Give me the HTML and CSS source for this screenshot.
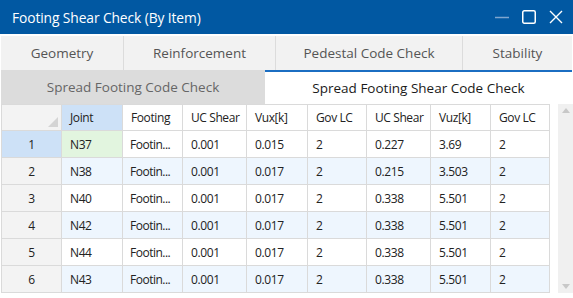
FILE: index.html
```html
<!DOCTYPE html>
<html>
<head>
<meta charset="utf-8">
<link rel="stylesheet" href="styles.css">
</head>
<body>
<div class="window">
  <div class="titlebar">
    <span class="title">Footing Shear Check (By Item)</span>
    <div class="controls">
      <svg class="ctl" width="16" height="16" viewBox="0 0 16 16"><line x1="1" y1="8.5" x2="15" y2="8.5" stroke="#7fa6cf" stroke-width="1.5"/></svg>
      <svg class="ctl" width="16" height="16" viewBox="0 0 16 16"><rect x="1.75" y="1.75" width="12.5" height="12.5" rx="1.5" fill="none" stroke="#fff" stroke-width="1.5"/></svg>
      <svg class="ctl" width="16" height="16" viewBox="0 0 16 16"><path d="M2 2 L14 14 M14 2 L2 14" stroke="#fff" stroke-width="1.4"/></svg>
    </div>
  </div>
  <div class="tabs">
    <div class="tabrow">
      <div class="tab t1">Geometry</div>
      <div class="tab t2">Reinforcement</div>
      <div class="tab t3">Pedestal Code Check</div>
      <div class="tab t4">Stability</div>
    </div>
    <div class="tabrow row2">
      <div class="tab2 inactive">Spread Footing Code Check</div>
      <div class="tab2 active">Spread Footing Shear Code Check</div>
    </div>
  </div>
  <div class="content">
    <table class="grid">
      <colgroup>
        <col class="c0"><col class="c1"><col class="c2"><col class="c3"><col class="c4"><col class="c5"><col class="c6"><col class="c7"><col class="c8">
      </colgroup>
      <thead>
        <tr>
          <th class="corner"><span class="tri"></span></th>
          <th class="hsel">Joint</th><th>Footing</th><th>UC Shear</th><th>Vux[k]</th><th>Gov LC</th><th>UC Shear</th><th>Vuz[k]</th><th>Gov LC</th>
        </tr>
      </thead>
      <tbody>
        <tr class="odd"><td class="rh rsel">1</td><td class="cur">N37</td><td class="ft">Footin...</td><td>0.001</td><td>0.015</td><td>2</td><td>0.227</td><td>3.69</td><td>2</td></tr>
        <tr class="even"><td class="rh">2</td><td>N38</td><td class="ft">Footin...</td><td>0.001</td><td>0.017</td><td>2</td><td>0.215</td><td>3.503</td><td>2</td></tr>
        <tr class="odd"><td class="rh">3</td><td>N40</td><td class="ft">Footin...</td><td>0.001</td><td>0.017</td><td>2</td><td>0.338</td><td>5.501</td><td>2</td></tr>
        <tr class="even"><td class="rh">4</td><td>N42</td><td class="ft">Footin...</td><td>0.001</td><td>0.017</td><td>2</td><td>0.338</td><td>5.501</td><td>2</td></tr>
        <tr class="odd"><td class="rh">5</td><td>N44</td><td class="ft">Footin...</td><td>0.001</td><td>0.017</td><td>2</td><td>0.338</td><td>5.501</td><td>2</td></tr>
        <tr class="even"><td class="rh">6</td><td>N43</td><td class="ft">Footin...</td><td>0.001</td><td>0.017</td><td>2</td><td>0.338</td><td>5.501</td><td>2</td></tr>
      </tbody>
    </table>
    <div class="scrollbar">
      <span class="arrow up"></span>
      <span class="arrow down"></span>
    </div>
  </div>
</div>
</body>
</html>
```
FILE: styles.css
```css
* { box-sizing: border-box; }
html, body { margin: 0; padding: 0; background: #fff; }
body { font-family: "Open Sans", "Noto Sans", sans-serif; }
.window { width: 573px; height: 298px; background: #fff; overflow: hidden; }
.titlebar {
  height: 34px; background: #0158a2; color: #fff;
  display: flex; align-items: center; justify-content: space-between;
  padding: 0 9px 0 12px;
}
.title { font-size: 13.8px; letter-spacing: -0.1px; }
.controls { display: flex; gap: 11px; align-items: center; }
.ctl { display: block; }
.tabs { padding: 2px 1px 0 1px; }
.tabrow { display: flex; height: 34px; }
.tab {
  background: #f2f2f2; color: #555; font-size: 13.5px;
  display: flex; align-items: center; justify-content: center;
  border-right: 1px solid #dcdcdc;
}
.t1 { width: 123px; }
.t2 { width: 152px; }
.t3 { width: 187px; }
.t4 { flex: 1; border-right: none; }
.row2 { height: 34px; }
.tab2 {
  display: flex; align-items: center; justify-content: center; font-size: 13.5px;
}
.inactive { width: 264px; background: #dcdcdc; color: #666; }
.active { flex: 1; background: #fff; color: #1a1a1a; border-top: 2px solid #1b6ec2; }
.content { display: flex; padding-left: 1px; }
.grid {
  border-collapse: collapse; table-layout: fixed; width: 549px;
  font-size: 12px; letter-spacing: -0.4px; color: #222;
}
.c0 { width: 60px; } .c1 { width: 61px; } .c2 { width: 60px; } .c3 { width: 64px; }
.c4 { width: 61px; } .c5 { width: 59px; } .c6 { width: 64px; } .c7 { width: 60px; } .c8 { width: 59px; }
.grid th, .grid td {
  height: 26px; border: 1px solid #dadada; padding: 0 0 0 8px;
  text-align: left; font-weight: normal; white-space: nowrap; overflow: hidden;
}
.grid td.ft { padding-left: 7px; letter-spacing: -0.5px; }
.grid th { background: #fff; color: #222; }
.grid th.corner { background: #f3f3f3; position: relative; }
.tri {
  position: absolute; right: 3px; bottom: 3px; width: 0; height: 0;
  border-left: 10px solid transparent; border-bottom: 10px solid #d4d4d4;
}
.grid th.hsel { background: #cde1f7; }
.grid td.rh { background: #f3f3f3; text-align: center; padding: 0; }
.grid td.rsel { background: #cde1f7; }
.grid td.cur { background: #e2f5df; }
.even td { background: #eef6fe; }
.scrollbar {
  margin-left: 8px; width: 16px; height: 189px; background: #f0f0f0;
  position: relative;
}
.arrow { position: absolute; left: 4px; width: 0; height: 0; border-left: 4px solid transparent; border-right: 4px solid transparent; }
.arrow.up { top: 4px; border-bottom: 5px solid #c8c8c8; }
.arrow.down { bottom: 4px; border-top: 5px solid #c8c8c8; }
```
